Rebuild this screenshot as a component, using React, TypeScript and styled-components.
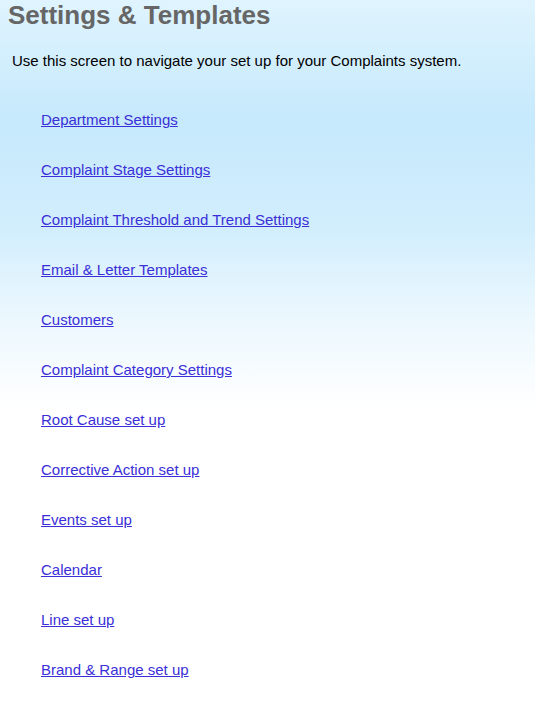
import styled, {createGlobalStyle} from 'styled-components'

const GlobalStyle = createGlobalStyle`
  html, body {
    margin: 0;
    padding: 0;
  }
  body {
    font-family: "Liberation Sans", Arial, sans-serif;
    background: #ffffff;
  }
`

const links = [
    'Department Settings',
    'Complaint Stage Settings',
    'Complaint Threshold and Trend Settings',
    'Email & Letter Templates',
    'Customers',
    'Complaint Category Settings',
    'Root Cause set up',
    'Corrective Action set up',
    'Events set up',
    'Calendar',
    'Line set up',
    'Brand & Range set up'
]

function App() {
    return (
        <Page>
            <GlobalStyle/>
            <Title>Settings &amp; Templates</Title>
            <Intro>Use this screen to navigate your set up for your Complaints system.</Intro>
            <LinkList>
                {links.map(label => (
                    <li key={label}>
                        <NavLink href="#">{label}</NavLink>
                    </li>
                ))}
            </LinkList>
        </Page>
    )
}

export default App

const Page = styled.div`
  min-height: 715px;
  padding: 0 8px 20px 8px;
  box-sizing: border-box;
  background: linear-gradient(
    to bottom,
    #dff4fe 0px,
    #c6e9fc 120px,
    #d2eefd 230px,
    #ecf8fe 320px,
    #ffffff 410px
  );
`

const Title = styled.h1`
  margin: 0;
  font-size: 26px;
  line-height: 30px;
  font-weight: bold;
  color: #666666;
`

const Intro = styled.p`
  margin: 22px 0 0 4px;
  font-size: 15px;
  line-height: 17px;
  color: #000000;
`

const LinkList = styled.ul`
  list-style: none;
  margin: 42px 0 0 0;
  padding: 0 0 0 33px;
  display: flex;
  flex-direction: column;
  gap: 33px;

  li {
    font-size: 15px;
    line-height: 17px;
  }
`

const NavLink = styled.a`
  color: #3a2fd8;
  text-decoration: underline;
`
